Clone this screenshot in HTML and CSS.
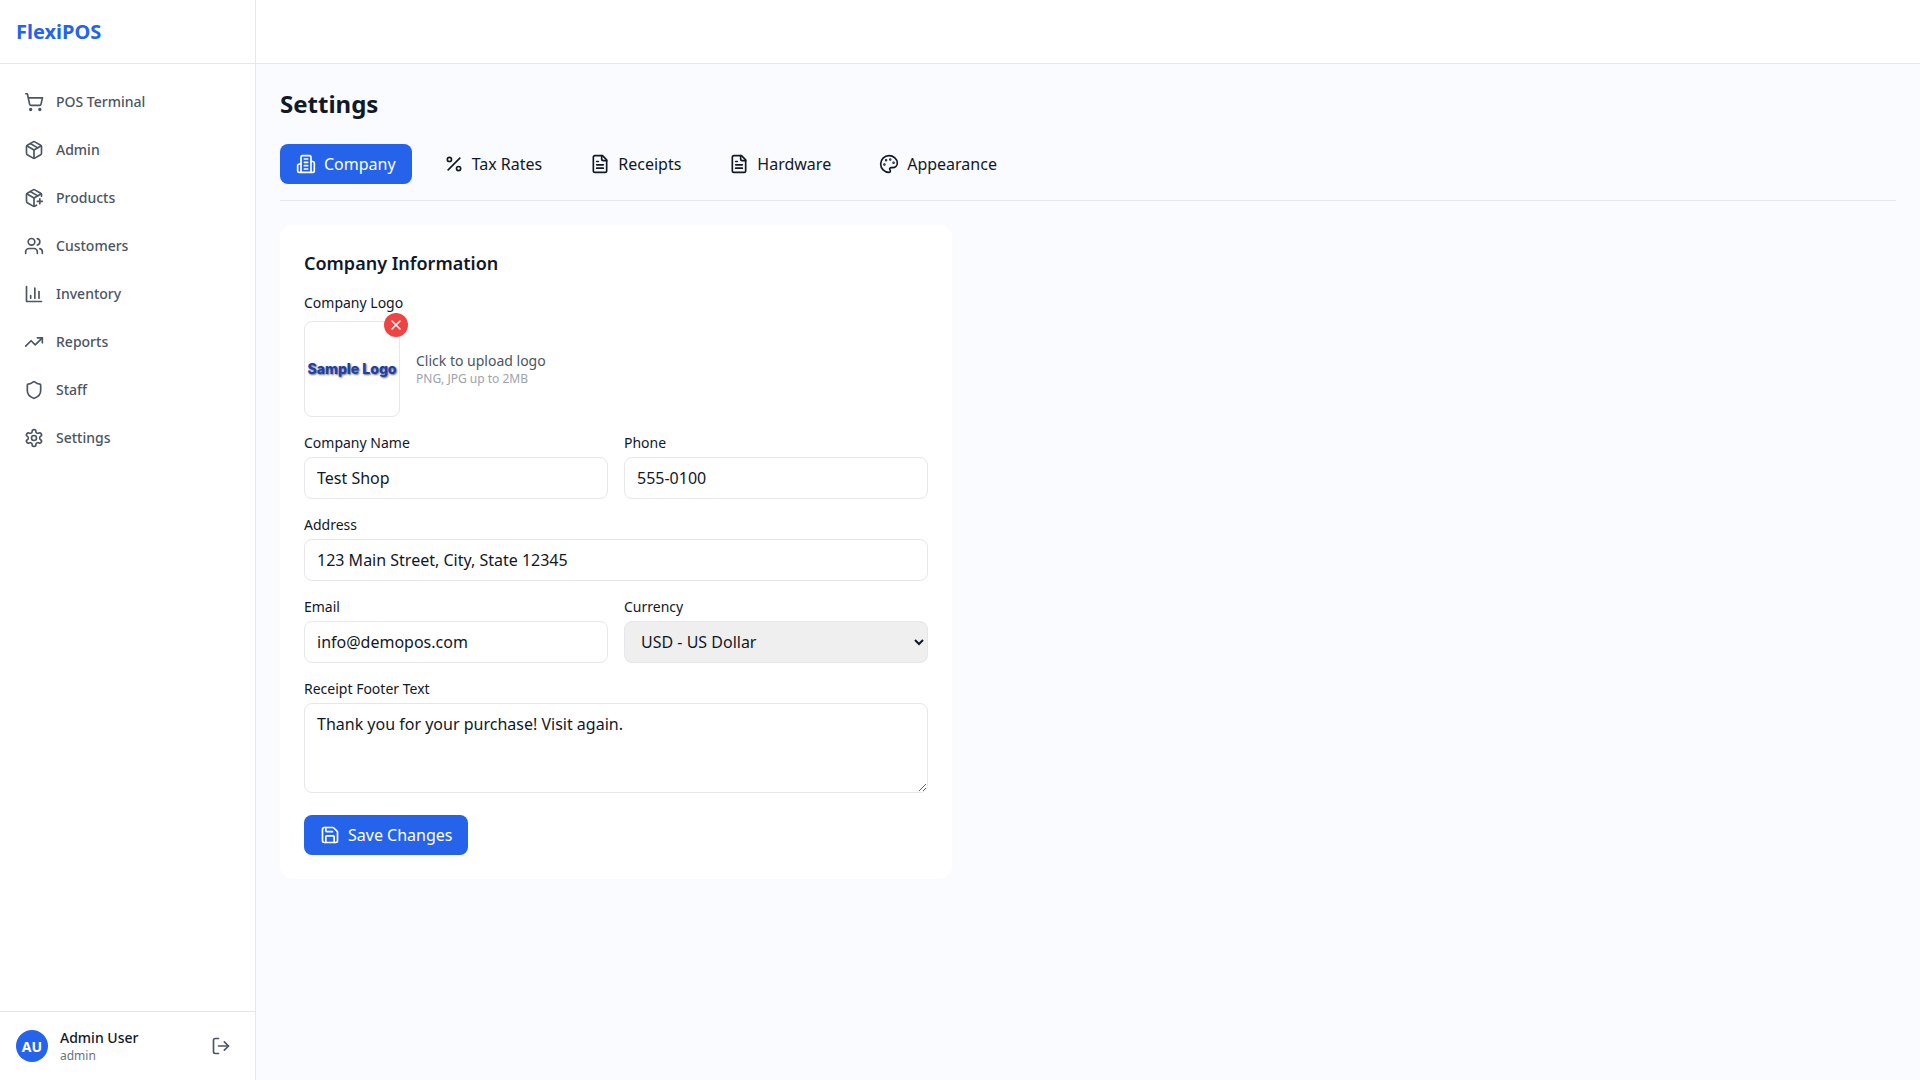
FILE: index.html
```html
<!DOCTYPE html>
<html lang="en">
<head>
  <meta charset="UTF-8">
  <meta name="viewport" content="width=device-width, initial-scale=1.0">
  <title>FlexiPOS Settings</title>
  <link rel="stylesheet" href="styles.css">
</head>
<body>
  <div class="app">

    <!-- Sidebar -->
    <aside class="sidebar">
      <div class="brand">FlexiPOS</div>
      <nav class="nav">
        <a class="nav-item"><svg class="icon" viewBox="0 0 24 24"><circle cx="8" cy="21" r="1"/><circle cx="19" cy="21" r="1"/><path d="M2.05 2.05h2l2.66 12.42a2 2 0 0 0 2 1.58h9.78a2 2 0 0 0 1.95-1.57l1.65-7.43H5.12"/></svg>POS Terminal</a>
        <a class="nav-item"><svg class="icon" viewBox="0 0 24 24"><path d="m7.5 4.27 9 5.15"/><path d="M21 8a2 2 0 0 0-1-1.73l-7-4a2 2 0 0 0-2 0l-7 4A2 2 0 0 0 3 8v8a2 2 0 0 0 1 1.73l7 4a2 2 0 0 0 2 0l7-4A2 2 0 0 0 21 16Z"/><path d="m3.3 7 8.7 5 8.7-5"/><path d="M12 22V12"/></svg>Admin</a>
        <a class="nav-item"><svg class="icon" viewBox="0 0 24 24"><path d="M16 16h6"/><path d="M19 13v6"/><path d="M21 10V8a2 2 0 0 0-1-1.73l-7-4a2 2 0 0 0-2 0l-7 4A2 2 0 0 0 3 8v8a2 2 0 0 0 1 1.73l7 4a2 2 0 0 0 2 0l2-1.14"/><path d="m7.5 4.27 9 5.15"/><path d="M3.29 7 12 12l8.71-5"/><path d="M12 22V12"/></svg>Products</a>
        <a class="nav-item"><svg class="icon" viewBox="0 0 24 24"><path d="M16 21v-2a4 4 0 0 0-4-4H6a4 4 0 0 0-4 4v2"/><circle cx="9" cy="7" r="4"/><path d="M22 21v-2a4 4 0 0 0-3-3.87"/><path d="M16 3.13a4 4 0 0 1 0 7.75"/></svg>Customers</a>
        <a class="nav-item"><svg class="icon" viewBox="0 0 24 24"><path d="M3 3v18h18"/><path d="M18 17V9"/><path d="M13 17V5"/><path d="M8 17v-3"/></svg>Inventory</a>
        <a class="nav-item"><svg class="icon" viewBox="0 0 24 24"><path d="M22 7l-8.5 8.5-5-5L2 17"/><path d="M16 7h6v6"/></svg>Reports</a>
        <a class="nav-item"><svg class="icon" viewBox="0 0 24 24"><path d="M20 13c0 5-3.5 7.5-7.66 8.95a1 1 0 0 1-.67-.01C7.5 20.5 4 18 4 13V6a1 1 0 0 1 1-1c2 0 4.5-1.2 6.24-2.72a1.17 1.17 0 0 1 1.52 0C14.51 3.81 17 5 19 5a1 1 0 0 1 1 1z"/></svg>Staff</a>
        <a class="nav-item"><svg class="icon" viewBox="0 0 24 24"><path d="M12.22 2h-.44a2 2 0 0 0-2 2v.18a2 2 0 0 1-1 1.73l-.43.25a2 2 0 0 1-2 0l-.15-.08a2 2 0 0 0-2.73.73l-.22.38a2 2 0 0 0 .73 2.73l.15.1a2 2 0 0 1 1 1.72v.51a2 2 0 0 1-1 1.74l-.15.09a2 2 0 0 0-.73 2.73l.22.38a2 2 0 0 0 2.73.73l.15-.08a2 2 0 0 1 2 0l.43.25a2 2 0 0 1 1 1.73V20a2 2 0 0 0 2 2h.44a2 2 0 0 0 2-2v-.18a2 2 0 0 1 1-1.73l.43-.25a2 2 0 0 1 2 0l.15.08a2 2 0 0 0 2.73-.73l.22-.39a2 2 0 0 0-.73-2.73l-.15-.08a2 2 0 0 1-1-1.74v-.5a2 2 0 0 1 1-1.74l.15-.09a2 2 0 0 0 .73-2.73l-.22-.38a2 2 0 0 0-2.73-.73l-.15.08a2 2 0 0 1-2 0l-.43-.25a2 2 0 0 1-1-1.73V4a2 2 0 0 0-2-2z"/><circle cx="12" cy="12" r="3"/></svg>Settings</a>
      </nav>
      <div class="user">
        <div class="avatar">AU</div>
        <div class="user-info">
          <div class="user-name">Admin User</div>
          <div class="user-role">admin</div>
        </div>
        <svg class="icon logout" viewBox="0 0 24 24"><path d="M9 21H5a2 2 0 0 1-2-2V5a2 2 0 0 1 2-2h4"/><path d="m16 17 5-5-5-5"/><path d="M21 12H9"/></svg>
      </div>
    </aside>

    <div class="content">
      <header class="topbar"></header>
      <main class="main">
        <h1>Settings</h1>

        <!-- Tabs -->
        <div class="tabs">
          <button class="tab active"><svg class="icon" viewBox="0 0 24 24"><path d="M6 22V4a2 2 0 0 1 2-2h8a2 2 0 0 1 2 2v18Z"/><path d="M6 12H4a2 2 0 0 0-2 2v6a2 2 0 0 0 2 2h2"/><path d="M18 9h2a2 2 0 0 1 2 2v9a2 2 0 0 1-2 2h-2"/><path d="M10 6h4"/><path d="M10 10h4"/><path d="M10 14h4"/><path d="M10 18h4"/></svg>Company</button>
          <button class="tab"><svg class="icon" viewBox="0 0 24 24"><path d="M19 5 5 19"/><circle cx="6.5" cy="6.5" r="2.5"/><circle cx="17.5" cy="17.5" r="2.5"/></svg>Tax Rates</button>
          <button class="tab"><svg class="icon" viewBox="0 0 24 24"><path d="M15 2H6a2 2 0 0 0-2 2v16a2 2 0 0 0 2 2h12a2 2 0 0 0 2-2V7Z"/><path d="M14 2v4a2 2 0 0 0 2 2h4"/><path d="M10 9H8"/><path d="M16 13H8"/><path d="M16 17H8"/></svg>Receipts</button>
          <button class="tab"><svg class="icon" viewBox="0 0 24 24"><path d="M15 2H6a2 2 0 0 0-2 2v16a2 2 0 0 0 2 2h12a2 2 0 0 0 2-2V7Z"/><path d="M14 2v4a2 2 0 0 0 2 2h4"/><path d="M10 9H8"/><path d="M16 13H8"/><path d="M16 17H8"/></svg>Hardware</button>
          <button class="tab"><svg class="icon" viewBox="0 0 24 24"><circle class="dot" cx="13.5" cy="6.5" r=".5"/><circle class="dot" cx="17.5" cy="10.5" r=".5"/><circle class="dot" cx="8.5" cy="7.5" r=".5"/><circle class="dot" cx="6.5" cy="12.5" r=".5"/><path d="M12 2C6.5 2 2 6.5 2 12s4.5 10 10 10c.926 0 1.648-.746 1.648-1.688 0-.437-.18-.835-.437-1.125-.29-.289-.438-.652-.438-1.125a1.64 1.64 0 0 1 1.668-1.668h1.996c3.051 0 5.555-2.503 5.555-5.554C21.965 6.012 17.461 2 12 2z"/></svg>Appearance</button>
        </div>

        <!-- Company form -->
        <section class="card">
          <h2>Company Information</h2>

          <div class="field">
            <label class="logo-label">Company Logo</label>
            <div class="logo-row">
              <div class="logo-box">
                <span class="sample-logo">Sample Logo</span>
                <span class="logo-remove"><svg class="icon" viewBox="0 0 24 24"><path d="M18 6 6 18"/><path d="m6 6 12 12"/></svg></span>
              </div>
              <div>
                <div class="upload-title">Click to upload logo</div>
                <div class="upload-hint">PNG, JPG up to 2MB</div>
              </div>
            </div>
          </div>

          <div class="field-row">
            <div class="field">
              <label>Company Name</label>
              <input class="input" type="text" value="Test Shop">
            </div>
            <div class="field">
              <label>Phone</label>
              <input class="input" type="text" value="555-0100">
            </div>
          </div>

          <div class="field">
            <label>Address</label>
            <input class="input" type="text" value="123 Main Street, City, State 12345">
          </div>

          <div class="field-row">
            <div class="field">
              <label>Email</label>
              <input class="input" type="text" value="info@demopos.com">
            </div>
            <div class="field">
              <label>Currency</label>
              <select class="input">
                <option>USD - US Dollar</option>
              </select>
            </div>
          </div>

          <div class="field">
            <label>Receipt Footer Text</label>
            <textarea class="input" rows="3">Thank you for your purchase! Visit again.</textarea>
          </div>

          <button class="save"><svg class="icon" viewBox="0 0 24 24"><path d="M15.2 3a2 2 0 0 1 1.4.6l3.8 3.8a2 2 0 0 1 .6 1.4V19a2 2 0 0 1-2 2H5a2 2 0 0 1-2-2V5a2 2 0 0 1 2-2z"/><path d="M17 21v-7a1 1 0 0 0-1-1H8a1 1 0 0 0-1 1v7"/><path d="M7 3v4a1 1 0 0 0 1 1h7"/></svg>Save Changes</button>
        </section>
      </main>
    </div>
  </div>
</body>
</html>
```

FILE: styles.css
```css
* {
  box-sizing: border-box;
}

body {
  margin: 0;
  font-family: "Noto Sans", sans-serif;
  color: #111827;
  background-color: #fafbfe;
}

.app {
  display: flex;
  height: 100vh;
  overflow: hidden;
}

.icon {
  width: 20px;
  height: 20px;
  flex-shrink: 0;
  fill: none;
  stroke: currentColor;
  stroke-width: 2;
  stroke-linecap: round;
  stroke-linejoin: round;
}

.dot {
  fill: currentColor;
}

/* Sidebar */
.sidebar {
  width: 256px;
  flex-shrink: 0;
  display: flex;
  flex-direction: column;
  background-color: #fff;
  border-right: 1px solid #e5e7eb;
}

.brand {
  height: 64px;
  padding: 0 16px;
  display: flex;
  align-items: center;
  font-size: 20px;
  font-weight: 700;
  color: #2563eb;
  border-bottom: 1px solid #e5e7eb;
}

.nav {
  flex: 1;
  padding: 16px 12px;
  display: flex;
  flex-direction: column;
  gap: 4px;
}

.nav-item {
  display: flex;
  align-items: center;
  gap: 12px;
  padding: 12px;
  height: 44px;
  font-size: 14px;
  line-height: 20px;
  font-weight: 500;
  color: #4b5563;
}

.user {
  height: 69px;
  padding: 0 16px;
  display: flex;
  align-items: center;
  gap: 12px;
  border-top: 1px solid #e5e7eb;
}

.avatar {
  width: 32px;
  height: 32px;
  border-radius: 50%;
  display: flex;
  align-items: center;
  justify-content: center;
  background-color: #2563eb;
  color: #fff;
  font-size: 14px;
  font-weight: 700;
}

.user-info {
  flex: 1;
}

.user-name {
  font-size: 14px;
  font-weight: 500;
  line-height: 20px;
}

.user-role {
  font-size: 12px;
  line-height: 16px;
  color: #6b7280;
}

.logout {
  color: #4b5563;
  margin-right: 8px;
}

/* Main area */
.content {
  flex: 1;
  display: flex;
  flex-direction: column;
  min-width: 0;
}

.topbar {
  height: 64px;
  flex-shrink: 0;
  background-color: #fff;
  border-bottom: 1px solid #e5e7eb;
}

.main {
  flex: 1;
  padding: 24px;
}

h1 {
  margin: 0 0 24px;
  font-size: 24px;
  line-height: 32px;
  font-weight: 700;
}

/* Tabs */
.tabs {
  display: flex;
  gap: 16px;
  padding-bottom: 16px;
  margin-bottom: 24px;
  border-bottom: 1px solid #e5e7eb;
}

.tab {
  display: flex;
  align-items: center;
  gap: 8px;
  height: 40px;
  padding: 0 16px;
  border: none;
  border-radius: 8px;
  background: none;
  font-family: inherit;
  font-size: 16px;
  color: #111827;
}

.tab.active {
  background-color: #2563eb;
  color: #fff;
}

/* Card and form */
.card {
  width: 672px;
  padding: 24px;
  background-color: #fff;
  border-radius: 12px;
  box-shadow: 0 1px 3px rgba(0, 0, 0, 0.01);
}

h2 {
  margin: 0 0 16px;
  font-size: 18px;
  line-height: 28px;
  font-weight: 600;
}

.field {
  margin-bottom: 16px;
  min-width: 0;
}

.field label {
  display: block;
  margin-bottom: 4px;
  font-size: 14px;
  line-height: 20px;
  font-weight: 400;
}

.field .logo-label {
  margin-bottom: 8px;
}

.field-row {
  display: grid;
  grid-template-columns: 1fr 1fr;
  gap: 16px;
}

.input {
  display: block;
  width: 100%;
  height: 42px;
  padding: 8px 12px;
  border: 1px solid #e5e7eb;
  border-radius: 8px;
  background-color: #fff;
  font-family: inherit;
  font-size: 16px;
  line-height: 24px;
  color: #111827;
}

select.input {
  background-color: #efefef;
}

textarea.input {
  height: 90px;
}

.logo-row {
  display: flex;
  align-items: center;
  gap: 16px;
}

.logo-box {
  position: relative;
  width: 96px;
  height: 96px;
  display: flex;
  align-items: center;
  justify-content: center;
  border: 1px solid #e5e7eb;
  border-radius: 8px;
}

.sample-logo {
  padding-bottom: 2px;
  font-family: Inter, sans-serif;
  font-size: 14px;
  font-weight: 800;
  white-space: nowrap;
  color: #1e40af;
  text-shadow: 1px 1px 2px rgba(0, 0, 0, 0.6);
}

.logo-remove {
  position: absolute;
  top: -9px;
  right: -9px;
  width: 24px;
  height: 24px;
  border-radius: 50%;
  display: flex;
  align-items: center;
  justify-content: center;
  background-color: #ef4444;
  color: #fff;
}

.logo-remove .icon {
  width: 16px;
  height: 16px;
}

.upload-title {
  font-size: 14px;
  line-height: 20px;
  color: #4b5563;
}

.upload-hint {
  font-size: 12px;
  line-height: 16px;
  color: #9ca3af;
}

.save {
  display: flex;
  align-items: center;
  gap: 8px;
  height: 40px;
  margin-top: 22px;
  padding: 0 16px;
  border: none;
  border-radius: 8px;
  background-color: #2563eb;
  color: #fff;
  font-family: inherit;
  font-size: 16px;
}
```
